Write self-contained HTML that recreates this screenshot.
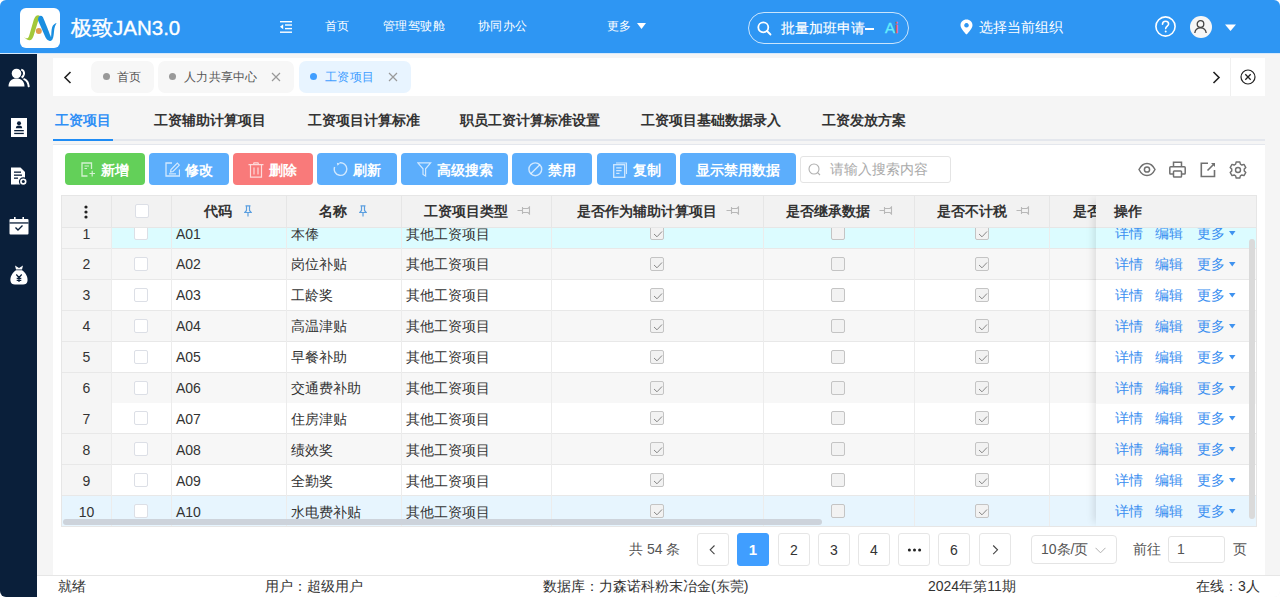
<!DOCTYPE html>
<html><head><meta charset="utf-8">
<style>
*{box-sizing:border-box;margin:0;padding:0}
html,body{width:1280px;height:597px;overflow:hidden;background:#fff;font-family:"Liberation Sans",sans-serif;color:#333}
.abs{position:absolute}
#win{position:absolute;left:0;top:0;width:1280px;height:597px;border-radius:6px;overflow:hidden;background:#f5f5f5}
#hdr{position:absolute;left:0;top:0;width:1280px;height:54px;background:#2e96f3;border-bottom:1px solid #d6e9fb}
#side{position:absolute;left:0;top:54px;width:37px;height:543px;background:#0a1f3a}
.t{position:absolute;white-space:nowrap;line-height:1}
.nav{color:#fff;font-size:12px;top:20px;letter-spacing:.45px}
#tabbar{position:absolute;left:53px;top:58px;width:1212px;height:38px;background:#fff}
.tab{position:absolute;top:3px;height:32px;border-radius:7px;background:#f7f7f7}
.dot{position:absolute;width:7px;height:7px;border-radius:50%;background:#999;top:12px}
.subtab{position:absolute;top:113px;font-size:14px;font-weight:bold;color:#333;line-height:1;white-space:nowrap}
#panel{position:absolute;left:53px;top:144px;width:1212px;height:431px;background:#fff;border-top:1px solid #e4e7ed}
.btn{position:absolute;top:153px;height:32px;border-radius:4px;background:#5caefc;color:#fff;font-size:14px;font-weight:bold}
.btn .t{top:10px}
.btn svg{position:absolute;top:9px}
#status{position:absolute;left:37px;top:575px;width:1243px;height:22px;background:#fff;border-top:1px solid #e6e6e6}
.st{position:absolute;top:3px;font-size:14px;color:#333;line-height:1;white-space:nowrap}
#tbl{position:absolute;left:61px;top:195px;width:1196px;height:332px;overflow:hidden;border:1px solid #e6e6e6;background:#fff}
.row{position:absolute;left:0;width:1194px;height:31px;border-bottom:1px solid #e8e8e8}
.vl{position:absolute;top:0;width:1px;background:#ececec}
.c{position:absolute;font-size:14px;line-height:1;white-space:nowrap;color:#333}
.cb{position:absolute;width:14px;height:14px;border:1px solid #dcdfe6;border-radius:2px;background:#fff}
.cbd{position:absolute;width:14px;height:14px;border:1px solid #c4c4c4;border-radius:2px;background:#f2f2f2}
.hd{position:absolute;top:8px;font-size:14px;font-weight:bold;line-height:1;white-space:nowrap;color:#333}
.lk{position:absolute;font-size:14px;line-height:1;white-space:nowrap;color:#3a8ef0}
.pg{position:absolute;top:533px;width:32px;height:33px;border:1px solid #e6e6e6;border-radius:3px;background:#fff;font-size:14px;color:#333;text-align:center;line-height:32px}
</style></head><body>
<div id="win">
<div id="hdr">
    <div class="abs" style="left:20px;top:8px;width:40px;height:40px;background:#fff;border-radius:6px">
      <svg width="40" height="40" viewBox="0 0 40 40">
        <path d="M3.8 29 C6 30.6 7.5 32.4 9.9 32.2 C12 32 13 29.5 13.7 27.5 L18.6 11.5 C19 10 19.4 9 20 8 C18.8 7 17 7.1 16 8.1 C14.8 9.3 14 11 13.4 13 L9.8 25.5 C9.2 27.8 8.6 29.6 7.8 30.1 C6.6 30.6 5.2 29.9 3.8 29 Z" fill="#a3c83a"/>
        <path d="M19 8.6 C20 7.4 21.8 7.5 22.8 9 C23.5 10 29.6 25.5 30.1 26.8 C30.5 28 30.8 29 31.1 29.1 C31.4 26.5 31.2 22 32.2 19 C33 16.8 34.6 15.5 36.6 14.9 C35.2 17 34.5 19.5 34.2 22 C33.8 25.5 33.8 29 32.4 31.4 C31.4 33 29.2 33.4 27.6 32.1 C26.5 31.2 25.6 29.6 24.9 28 L18.2 12.8 C17.8 11.6 18.1 9.6 19 8.6 Z" fill="#1a8ee0"/>
        <circle cx="18.8" cy="23" r="3" fill="#e39a4e"/>
      </svg>
    </div>
    <div class="t" style="left:71px;top:18px;font-size:20.5px;color:#fff;-webkit-text-stroke:0.35px #fff">极致JAN3.0</div>
    <svg class="abs" style="left:280px;top:20px" width="13" height="14" viewBox="0 0 13 14">
      <rect x="0" y="1" width="12" height="1.4" fill="#fff"/>
      <rect x="5" y="4.3" width="7" height="1.4" fill="#fff"/>
      <rect x="5" y="7.9" width="7" height="1.4" fill="#fff"/>
      <rect x="0" y="11.5" width="12" height="1.4" fill="#fff"/>
      <path d="M0 6.8 L3.2 4.3 L3.2 9.3 Z" fill="#fff"/>
    </svg>
    <div class="t nav" style="left:325px">首页</div>
    <div class="t nav" style="left:383px">管理驾驶舱</div>
    <div class="t nav" style="left:478px">协同办公</div>
    <div class="t nav" style="left:607px">更多</div>
    <svg class="abs" style="left:637px;top:23px" width="10" height="7"><path d="M0 0 L9 0 L4.5 6 Z" fill="#fff"/></svg>
    <div class="abs" style="left:748px;top:12px;width:161px;height:32px;border:1px solid rgba(255,255,255,.75);border-radius:16px"></div>
    <svg class="abs" style="left:757px;top:21px" width="15" height="15" viewBox="0 0 15 15"><circle cx="6.3" cy="6.3" r="5" stroke="#fff" stroke-width="1.8" fill="none"/><path d="M10 10 L13.5 13.5" stroke="#fff" stroke-width="1.8" stroke-linecap="round"/></svg>
    <div class="t" style="left:781px;top:21px;font-size:14px;color:#fff;-webkit-text-stroke:0.15px #fff">批量加班申请</div><div class="abs" style="left:865px;top:27.5px;width:9px;height:2px;background:#fff"></div>
    <div class="t" style="left:885px;top:20px;font-size:15px;-webkit-text-stroke:0.3px currentColor"><span style="color:#66eefc">A</span><span style="color:#f25c5c">i</span></div>
    <svg class="abs" style="left:960px;top:19px" width="13" height="16" viewBox="0 0 13 16"><path d="M6.5 0.5 C3 0.5 0.5 3 0.5 6.2 C0.5 10 6.5 15.5 6.5 15.5 C6.5 15.5 12.5 10 12.5 6.2 C12.5 3 10 0.5 6.5 0.5 Z M6.5 4 A2.3 2.3 0 1 1 6.49 4 Z" fill="#fff" fill-rule="evenodd"/></svg>
    <div class="t" style="left:979px;top:20px;font-size:14px;color:#fff">选择当前组织</div>
    <svg class="abs" style="left:1155px;top:16px" width="21" height="21" viewBox="0 0 21 21"><circle cx="10.5" cy="10.5" r="9.6" stroke="#fff" stroke-width="1.6" fill="none"/><path d="M7.5 8.2 C7.5 6.3 9 5.2 10.6 5.2 C12.3 5.2 13.6 6.4 13.6 8 C13.6 10 10.7 10.2 10.7 12.6" stroke="#fff" stroke-width="1.6" fill="none" stroke-linecap="round"/><circle cx="10.7" cy="15.4" r="1" fill="#fff"/></svg>
    <div class="abs" style="left:1189.5px;top:15.5px;width:22px;height:22px;border-radius:50%;background:#f6f6f6"></div>
    <svg class="abs" style="left:1193px;top:19px" width="15" height="15" viewBox="0 0 15 15"><circle cx="7.5" cy="5" r="3.3" stroke="#444" stroke-width="1.3" fill="none"/><path d="M1.8 14 C2.2 10.5 4.6 8.8 7.5 8.8 C10.4 8.8 12.8 10.5 13.2 14" stroke="#444" stroke-width="1.3" fill="none"/></svg>
    <svg class="abs" style="left:1225px;top:24px" width="12" height="8"><path d="M0 0.5 L11 0.5 L5.5 7 Z" fill="#fff"/></svg>
  </div>
<div id="side">
  <svg class="abs" style="left:8px;top:14px" width="22" height="20" viewBox="0 0 22 20">
    <circle cx="8.5" cy="5.5" r="4.8" fill="#fff"/>
    <path d="M0.5 18.5 C0.5 13 4 10.5 8.5 10.5 C13 10.5 16.5 13 16.5 18.5 Z" fill="#fff"/>
    <path d="M13.2 1.6 C15.2 2.2 16.3 4 16 6.2 C15.7 8 14.6 9 13.6 9.6" stroke="#fff" stroke-width="2" fill="none"/>
    <path d="M16.2 11.2 C18.8 12.4 20.4 14.8 20.7 18.3" stroke="#fff" stroke-width="2" fill="none" stroke-linecap="round"/>
  </svg>
  <svg class="abs" style="left:11px;top:64px" width="16" height="19" viewBox="0 0 16 19">
    <rect x="0" y="0" width="16" height="19" fill="#fff"/>
    <circle cx="8" cy="5.3" r="2" fill="#0a1f3a"/>
    <path d="M4.8 10.3 C4.8 8.3 6.2 7.6 8 7.6 C9.8 7.6 11.2 8.3 11.2 10.3 Z" fill="#0a1f3a"/>
    <rect x="3.2" y="12" width="9.6" height="1.3" fill="#0a1f3a"/>
    <rect x="3.2" y="14.8" width="9.6" height="1.3" fill="#0a1f3a"/>
  </svg>
  <svg class="abs" style="left:10px;top:113px" width="18" height="19" viewBox="0 0 18 19">
    <path d="M1 0.5 L10.5 0.5 L15 5 L15 17.5 L1 17.5 Z" fill="#fff"/>
    <rect x="4" y="4.5" width="7" height="1.3" fill="#0a1f3a"/>
    <rect x="4" y="7.5" width="8" height="1.3" fill="#0a1f3a"/>
    <rect x="4" y="10.5" width="4" height="1.3" fill="#0a1f3a"/>
    <circle cx="13.3" cy="14.6" r="3.8" fill="#fff" stroke="#0a1f3a" stroke-width="1.2"/>
    <circle cx="13.3" cy="14.6" r="1.5" fill="#0a1f3a"/>
  </svg>
  <svg class="abs" style="left:9px;top:163px" width="20" height="18" viewBox="0 0 20 18">
    <rect x="0.5" y="2" width="19" height="15.5" rx="1" fill="#fff"/>
    <rect x="0.5" y="5.3" width="19" height="1.3" fill="#0a1f3a"/>
    <rect x="5" y="0" width="1.6" height="4" fill="#fff"/>
    <rect x="13.4" y="0" width="1.6" height="4" fill="#fff"/>
    <path d="M6.5 10.5 L9 13 L13.5 8.5" stroke="#0a1f3a" stroke-width="1.4" fill="none"/>
  </svg>
  <svg class="abs" style="left:10px;top:211px" width="18" height="20" viewBox="0 0 18 20">
    <path d="M5 0.5 L9 3 L13 0.5 L12 4.5 L6 4.5 Z" fill="#fff"/>
    <path d="M6 5.2 L12 5.2 C16 8 18 12 17.5 16 C17.2 18.5 15.5 19.5 13 19.5 L5 19.5 C2.5 19.5 0.8 18.5 0.5 16 C0 12 2 8 6 5.2 Z" fill="#fff"/>
    <path d="M6.3 9.5 L9 12.5 L11.7 9.5 M9 12.5 L9 17 M6.7 13.3 L11.3 13.3 M6.7 15.3 L11.3 15.3" stroke="#0a1f3a" stroke-width="1.2" fill="none"/>
  </svg>
</div>
<div id="tabbar">
    <svg class="abs" style="left:9.5px;top:12.5px" width="9" height="13" viewBox="0 0 9 13"><path d="M7.5 1 L2 6.5 L7.5 12" stroke="#222" stroke-width="1.6" fill="none"/></svg>
    <div class="tab" style="left:38px;width:63px"><div class="dot" style="left:12px"></div><div class="t" style="left:26px;top:10px;font-size:12px;letter-spacing:.3px;color:#555">首页</div></div>
    <div class="tab" style="left:105px;width:136px"><div class="dot" style="left:11px"></div><div class="t" style="left:26px;top:10px;font-size:12px;letter-spacing:.3px;color:#555">人力共享中心</div>
      <svg class="abs" style="left:113px;top:11px" width="10" height="10"><path d="M1 1 L9 9 M9 1 L1 9" stroke="#999" stroke-width="1.2"/></svg></div>
    <div class="tab" style="left:246px;width:112px;background:#e8f4ff"><div class="dot" style="left:11px;background:#409eff"></div><div class="t" style="left:26px;top:10px;font-size:12px;letter-spacing:.3px;color:#409eff">工资项目</div>
      <svg class="abs" style="left:89px;top:11px" width="10" height="10"><path d="M1 1 L9 9 M9 1 L1 9" stroke="#999" stroke-width="1.2"/></svg></div>
    <div class="abs" style="left:1177px;top:0;width:1px;height:38px;background:#f0f0f0"></div>
    <svg class="abs" style="left:1159px;top:12.5px" width="9" height="13" viewBox="0 0 9 13"><path d="M1.5 1 L7 6.5 L1.5 12" stroke="#222" stroke-width="1.6" fill="none"/></svg>
    <svg class="abs" style="left:1187px;top:11px" width="16" height="16" viewBox="0 0 16 16"><circle cx="8" cy="8" r="7" stroke="#222" stroke-width="1.2" fill="none"/><path d="M5.3 5.3 L10.7 10.7 M10.7 5.3 L5.3 10.7" stroke="#222" stroke-width="1.3"/></svg>
  </div>
<div class="subtab" style="left:55px;color:#2f8ff5">工资项目</div>
<div class="subtab" style="left:154px">工资辅助计算项目</div>
<div class="subtab" style="left:308px">工资项目计算标准</div>
<div class="subtab" style="left:460px">职员工资计算标准设置</div>
<div class="subtab" style="left:641px">工资项目基础数据录入</div>
<div class="subtab" style="left:822px">工资发放方案</div>
<div class="abs" style="left:53px;top:139px;width:1212px;height:2px;background:#e4e7ed"></div>
<div class="abs" style="left:53px;top:139px;width:60px;height:2px;background:#1f8cf5"></div>
<div id="panel"></div>
<div class="btn" style="left:65px;width:80px;background:#63d059"><svg style="left:16px" width="15" height="15" viewBox="0 0 15 15"><path d="M10.5 7 L10.5 1 L1 1 L1 14 L6.5 14" stroke="rgba(255,255,255,.72)" stroke-width="1.3" fill="none"/><path d="M3.5 4 L8 4 M3.5 6.5 L6 6.5 M8.5 11.5 L14 11.5 M11.2 8.8 L11.2 14.5" stroke="rgba(255,255,255,.72)" stroke-width="1.2" fill="none"/></svg><div class="t" style="left:36px">新增</div></div>
<div class="btn" style="left:149px;width:80px"><svg style="left:16px" width="15" height="15" viewBox="0 0 15 15"><path d="M7 1 L1 1 L1 14 L14.5 14 L14.5 7.5" stroke="rgba(255,255,255,.72)" stroke-width="1.3" fill="none"/><path d="M5.5 10 L6 7.5 L12.3 1.2 L14.3 3.2 L8 9.5 Z M4 11.8 L11 11.8" stroke="rgba(255,255,255,.72)" stroke-width="1.2" fill="none"/></svg><div class="t" style="left:36px">修改</div></div>
<div class="btn" style="left:233px;width:80px;background:#f97a7a"><svg style="left:15px" width="16" height="16" viewBox="0 0 16 16"><path d="M0.5 2.6 L15.5 2.6 M5.5 2.5 L6 0.8 L10 0.8 L10.5 2.5 M2.5 3 L2.5 15.2 L13.5 15.2 L13.5 3 M6 5.5 L6 12.5 M10 5.5 L10 12.5" stroke="rgba(255,255,255,.72)" stroke-width="1.2" fill="none"/></svg><div class="t" style="left:36px">删除</div></div>
<div class="btn" style="left:317px;width:80px"><svg style="left:16px" width="15" height="15" viewBox="0 0 15 15"><path d="M4.6 1.8 A6.3 6.3 0 1 0 11 1.8" stroke="rgba(255,255,255,.72)" stroke-width="1.4" fill="none" transform="rotate(-40 7.5 7.5)"/><path d="M3.8 0.8 L7 1.6 L4.5 3.8 Z" fill="rgba(255,255,255,.72)"/></svg><div class="t" style="left:36px">刷新</div></div>
<div class="btn" style="left:401px;width:107px"><svg style="left:16px" width="15" height="15" viewBox="0 0 15 15"><path d="M0.8 0.8 L13.6 0.8 L8.6 6.8 L8.6 14 L6 12.5 L6 6.8 Z" stroke="rgba(255,255,255,.72)" stroke-width="1.2" fill="none"/></svg><div class="t" style="left:36px">高级搜索</div></div>
<div class="btn" style="left:512px;width:80px"><svg style="left:16px" width="15" height="15" viewBox="0 0 15 15"><circle cx="7.3" cy="7.3" r="6.4" stroke="rgba(255,255,255,.72)" stroke-width="1.4" fill="none"/><path d="M2.8 11.8 L11.8 2.8" stroke="rgba(255,255,255,.72)" stroke-width="1.4"/></svg><div class="t" style="left:36px">禁用</div></div>
<div class="btn" style="left:597px;width:79px"><svg style="left:16px" width="15" height="16" viewBox="0 0 15 16"><path d="M3 1 L13.5 1 L13.5 12" stroke="rgba(255,255,255,.72)" stroke-width="1.1" fill="none"/><rect x="0.7" y="2.7" width="11" height="12.6" stroke="rgba(255,255,255,.72)" stroke-width="1.3" fill="none"/><path d="M3.2 5.8 L8.6 5.8 M3.2 8.6 L8.6 8.6 M3.2 11.4 L6.5 11.4" stroke="rgba(255,255,255,.72)" stroke-width="1.2"/></svg><div class="t" style="left:36px">复制</div></div>
<div class="btn" style="left:680px;width:116px"><div class="t" style="left:16px">显示禁用数据</div></div>
<div class="abs" style="left:800px;top:156px;width:151px;height:27px;border:1px solid #e4e4e4;border-radius:3px;background:#fff">
  <svg class="abs" style="left:7px;top:6px" width="13" height="13" viewBox="0 0 13 13"><circle cx="6" cy="6" r="5" stroke="#b0b0b0" stroke-width="1.1" fill="none"/><path d="M9.6 9.6 L12 12" stroke="#b0b0b0" stroke-width="1.1"/></svg>
  <div class="t" style="left:29px;top:5px;font-size:14px;color:#aaa">请输入搜索内容</div>
</div>
<svg class="abs" style="left:1138px;top:162px" width="18" height="15" viewBox="0 0 18 15"><path d="M1 7.5 C3 3.5 6 1.5 9 1.5 C12 1.5 15 3.5 17 7.5 C15 11.5 12 13.5 9 13.5 C6 13.5 3 11.5 1 7.5 Z" stroke="#707070" stroke-width="1.5" fill="none"/><circle cx="9" cy="7.5" r="2.6" stroke="#707070" stroke-width="1.5" fill="none"/></svg>
<svg class="abs" style="left:1169px;top:161px" width="17" height="17" viewBox="0 0 17 17"><path d="M4.5 5.5 L4.5 1.2 L12.5 1.2 L12.5 5.5" stroke="#707070" stroke-width="1.5" fill="none"/><path d="M4 13 L1.5 13 C1 13 0.8 12.7 0.8 12.2 L0.8 6.8 C0.8 6.2 1.2 5.8 1.8 5.8 L15.2 5.8 C15.8 5.8 16.2 6.2 16.2 6.8 L16.2 12.2 C16.2 12.7 16 13 15.5 13 L13 13" stroke="#707070" stroke-width="1.5" fill="none"/><rect x="4.5" y="10" width="8" height="6" rx="0.8" stroke="#707070" stroke-width="1.5" fill="none"/></svg>
<svg class="abs" style="left:1200px;top:162px" width="16" height="16" viewBox="0 0 16 16"><path d="M8 1.3 L1.3 1.3 L1.3 14.5 L14.5 14.5 L14.5 8" stroke="#707070" stroke-width="1.6" fill="none"/><path d="M7.5 8.5 L14 2" stroke="#707070" stroke-width="1.6"/><path d="M11 1 L15 1 L15 5 Z" fill="#707070"/></svg>
<svg class="abs" style="left:1229px;top:161px" width="18" height="18" viewBox="0 0 18 18"><path d="M7.16 1.01 L10.84 1.01 L11.36 3.16 L12.88 4.04 L15.00 3.41 L16.84 6.60 L15.24 8.12 L15.24 9.88 L16.84 11.40 L15.00 14.59 L12.88 13.96 L11.36 14.84 L10.84 16.99 L7.16 16.99 L6.64 14.84 L5.12 13.96 L3.00 14.59 L1.16 11.40 L2.76 9.88 L2.76 8.12 L1.16 6.60 L3.00 3.41 L5.12 4.04 L6.64 3.16 Z" stroke="#707070" stroke-width="1.4" fill="none" stroke-linejoin="round"/><circle cx="9" cy="9" r="2.5" stroke="#707070" stroke-width="1.4" fill="none"/></svg>
<div id="tbl">
<div class="row" style="top:22.00px;background:#dcfcff">
<div class="abs" style="left:0;top:0;width:49px;height:30px;background:#f5f5f5"></div>
<div class="c" style="left:0;width:49px;text-align:center;top:8.5px">1</div>
<div class="cb" style="left:72px;top:8px"></div>
<div class="c" style="left:114px;top:8.5px">A01</div>
<div class="c" style="left:229px;top:8.5px">本俸</div>
<div class="c" style="left:344px;top:8.5px">其他工资项目</div>
<div class="cbd" style="left:588px;top:8px"><svg width="14" height="14" style="position:absolute;left:0;top:0" viewBox="0 0 14 14"><path d="M3 7 L6 9.8 L11 4.5" stroke="#888" stroke-width="1" fill="none"/></svg></div>
<div class="cbd" style="left:769px;top:8px"></div>
<div class="cbd" style="left:913px;top:8px"><svg width="14" height="14" style="position:absolute;left:0;top:0" viewBox="0 0 14 14"><path d="M3 7 L6 9.8 L11 4.5" stroke="#888" stroke-width="1" fill="none"/></svg></div>
</div>
<div class="row" style="top:52.90px;background:#f7f7f7">
<div class="abs" style="left:0;top:0;width:49px;height:30px;background:#f5f5f5"></div>
<div class="c" style="left:0;width:49px;text-align:center;top:8.5px">2</div>
<div class="cb" style="left:72px;top:8px"></div>
<div class="c" style="left:114px;top:8.5px">A02</div>
<div class="c" style="left:229px;top:8.5px">岗位补贴</div>
<div class="c" style="left:344px;top:8.5px">其他工资项目</div>
<div class="cbd" style="left:588px;top:8px"><svg width="14" height="14" style="position:absolute;left:0;top:0" viewBox="0 0 14 14"><path d="M3 7 L6 9.8 L11 4.5" stroke="#888" stroke-width="1" fill="none"/></svg></div>
<div class="cbd" style="left:769px;top:8px"></div>
<div class="cbd" style="left:913px;top:8px"><svg width="14" height="14" style="position:absolute;left:0;top:0" viewBox="0 0 14 14"><path d="M3 7 L6 9.8 L11 4.5" stroke="#888" stroke-width="1" fill="none"/></svg></div>
</div>
<div class="row" style="top:83.80px;background:#fff">
<div class="abs" style="left:0;top:0;width:49px;height:30px;background:#f5f5f5"></div>
<div class="c" style="left:0;width:49px;text-align:center;top:8.5px">3</div>
<div class="cb" style="left:72px;top:8px"></div>
<div class="c" style="left:114px;top:8.5px">A03</div>
<div class="c" style="left:229px;top:8.5px">工龄奖</div>
<div class="c" style="left:344px;top:8.5px">其他工资项目</div>
<div class="cbd" style="left:588px;top:8px"><svg width="14" height="14" style="position:absolute;left:0;top:0" viewBox="0 0 14 14"><path d="M3 7 L6 9.8 L11 4.5" stroke="#888" stroke-width="1" fill="none"/></svg></div>
<div class="cbd" style="left:769px;top:8px"></div>
<div class="cbd" style="left:913px;top:8px"><svg width="14" height="14" style="position:absolute;left:0;top:0" viewBox="0 0 14 14"><path d="M3 7 L6 9.8 L11 4.5" stroke="#888" stroke-width="1" fill="none"/></svg></div>
</div>
<div class="row" style="top:114.70px;background:#f7f7f7">
<div class="abs" style="left:0;top:0;width:49px;height:30px;background:#f5f5f5"></div>
<div class="c" style="left:0;width:49px;text-align:center;top:8.5px">4</div>
<div class="cb" style="left:72px;top:8px"></div>
<div class="c" style="left:114px;top:8.5px">A04</div>
<div class="c" style="left:229px;top:8.5px">高温津贴</div>
<div class="c" style="left:344px;top:8.5px">其他工资项目</div>
<div class="cbd" style="left:588px;top:8px"><svg width="14" height="14" style="position:absolute;left:0;top:0" viewBox="0 0 14 14"><path d="M3 7 L6 9.8 L11 4.5" stroke="#888" stroke-width="1" fill="none"/></svg></div>
<div class="cbd" style="left:769px;top:8px"></div>
<div class="cbd" style="left:913px;top:8px"><svg width="14" height="14" style="position:absolute;left:0;top:0" viewBox="0 0 14 14"><path d="M3 7 L6 9.8 L11 4.5" stroke="#888" stroke-width="1" fill="none"/></svg></div>
</div>
<div class="row" style="top:145.60px;background:#fff">
<div class="abs" style="left:0;top:0;width:49px;height:30px;background:#f5f5f5"></div>
<div class="c" style="left:0;width:49px;text-align:center;top:8.5px">5</div>
<div class="cb" style="left:72px;top:8px"></div>
<div class="c" style="left:114px;top:8.5px">A05</div>
<div class="c" style="left:229px;top:8.5px">早餐补助</div>
<div class="c" style="left:344px;top:8.5px">其他工资项目</div>
<div class="cbd" style="left:588px;top:8px"><svg width="14" height="14" style="position:absolute;left:0;top:0" viewBox="0 0 14 14"><path d="M3 7 L6 9.8 L11 4.5" stroke="#888" stroke-width="1" fill="none"/></svg></div>
<div class="cbd" style="left:769px;top:8px"></div>
<div class="cbd" style="left:913px;top:8px"><svg width="14" height="14" style="position:absolute;left:0;top:0" viewBox="0 0 14 14"><path d="M3 7 L6 9.8 L11 4.5" stroke="#888" stroke-width="1" fill="none"/></svg></div>
</div>
<div class="row" style="top:176.50px;background:#f7f7f7">
<div class="abs" style="left:0;top:0;width:49px;height:30px;background:#f5f5f5"></div>
<div class="c" style="left:0;width:49px;text-align:center;top:8.5px">6</div>
<div class="cb" style="left:72px;top:8px"></div>
<div class="c" style="left:114px;top:8.5px">A06</div>
<div class="c" style="left:229px;top:8.5px">交通费补助</div>
<div class="c" style="left:344px;top:8.5px">其他工资项目</div>
<div class="cbd" style="left:588px;top:8px"><svg width="14" height="14" style="position:absolute;left:0;top:0" viewBox="0 0 14 14"><path d="M3 7 L6 9.8 L11 4.5" stroke="#888" stroke-width="1" fill="none"/></svg></div>
<div class="cbd" style="left:769px;top:8px"></div>
<div class="cbd" style="left:913px;top:8px"><svg width="14" height="14" style="position:absolute;left:0;top:0" viewBox="0 0 14 14"><path d="M3 7 L6 9.8 L11 4.5" stroke="#888" stroke-width="1" fill="none"/></svg></div>
</div>
<div class="row" style="top:207.40px;background:#fff">
<div class="abs" style="left:0;top:0;width:49px;height:30px;background:#f5f5f5"></div>
<div class="c" style="left:0;width:49px;text-align:center;top:8.5px">7</div>
<div class="cb" style="left:72px;top:8px"></div>
<div class="c" style="left:114px;top:8.5px">A07</div>
<div class="c" style="left:229px;top:8.5px">住房津贴</div>
<div class="c" style="left:344px;top:8.5px">其他工资项目</div>
<div class="cbd" style="left:588px;top:8px"><svg width="14" height="14" style="position:absolute;left:0;top:0" viewBox="0 0 14 14"><path d="M3 7 L6 9.8 L11 4.5" stroke="#888" stroke-width="1" fill="none"/></svg></div>
<div class="cbd" style="left:769px;top:8px"></div>
<div class="cbd" style="left:913px;top:8px"><svg width="14" height="14" style="position:absolute;left:0;top:0" viewBox="0 0 14 14"><path d="M3 7 L6 9.8 L11 4.5" stroke="#888" stroke-width="1" fill="none"/></svg></div>
</div>
<div class="row" style="top:238.30px;background:#f7f7f7">
<div class="abs" style="left:0;top:0;width:49px;height:30px;background:#f5f5f5"></div>
<div class="c" style="left:0;width:49px;text-align:center;top:8.5px">8</div>
<div class="cb" style="left:72px;top:8px"></div>
<div class="c" style="left:114px;top:8.5px">A08</div>
<div class="c" style="left:229px;top:8.5px">绩效奖</div>
<div class="c" style="left:344px;top:8.5px">其他工资项目</div>
<div class="cbd" style="left:588px;top:8px"><svg width="14" height="14" style="position:absolute;left:0;top:0" viewBox="0 0 14 14"><path d="M3 7 L6 9.8 L11 4.5" stroke="#888" stroke-width="1" fill="none"/></svg></div>
<div class="cbd" style="left:769px;top:8px"></div>
<div class="cbd" style="left:913px;top:8px"><svg width="14" height="14" style="position:absolute;left:0;top:0" viewBox="0 0 14 14"><path d="M3 7 L6 9.8 L11 4.5" stroke="#888" stroke-width="1" fill="none"/></svg></div>
</div>
<div class="row" style="top:269.20px;background:#fff">
<div class="abs" style="left:0;top:0;width:49px;height:30px;background:#f5f5f5"></div>
<div class="c" style="left:0;width:49px;text-align:center;top:8.5px">9</div>
<div class="cb" style="left:72px;top:8px"></div>
<div class="c" style="left:114px;top:8.5px">A09</div>
<div class="c" style="left:229px;top:8.5px">全勤奖</div>
<div class="c" style="left:344px;top:8.5px">其他工资项目</div>
<div class="cbd" style="left:588px;top:8px"><svg width="14" height="14" style="position:absolute;left:0;top:0" viewBox="0 0 14 14"><path d="M3 7 L6 9.8 L11 4.5" stroke="#888" stroke-width="1" fill="none"/></svg></div>
<div class="cbd" style="left:769px;top:8px"></div>
<div class="cbd" style="left:913px;top:8px"><svg width="14" height="14" style="position:absolute;left:0;top:0" viewBox="0 0 14 14"><path d="M3 7 L6 9.8 L11 4.5" stroke="#888" stroke-width="1" fill="none"/></svg></div>
</div>
<div class="row" style="top:300.10px;background:#e7f5fe">
<div class="abs" style="left:0;top:0;width:49px;height:30px;background:#e7f5fe"></div>
<div class="c" style="left:0;width:49px;text-align:center;top:8.5px">10</div>
<div class="cb" style="left:72px;top:8px"></div>
<div class="c" style="left:114px;top:8.5px">A10</div>
<div class="c" style="left:229px;top:8.5px">水电费补贴</div>
<div class="c" style="left:344px;top:8.5px">其他工资项目</div>
<div class="cbd" style="left:588px;top:8px"><svg width="14" height="14" style="position:absolute;left:0;top:0" viewBox="0 0 14 14"><path d="M3 7 L6 9.8 L11 4.5" stroke="#888" stroke-width="1" fill="none"/></svg></div>
<div class="cbd" style="left:769px;top:8px"></div>
<div class="cbd" style="left:913px;top:8px"><svg width="14" height="14" style="position:absolute;left:0;top:0" viewBox="0 0 14 14"><path d="M3 7 L6 9.8 L11 4.5" stroke="#888" stroke-width="1" fill="none"/></svg></div>
</div>
<div class="vl" style="left:49px;height:332px"></div>
<div class="vl" style="left:109px;height:332px"></div>
<div class="vl" style="left:224px;height:332px"></div>
<div class="vl" style="left:339px;height:332px"></div>
<div class="vl" style="left:489px;height:332px"></div>
<div class="vl" style="left:701px;height:332px"></div>
<div class="vl" style="left:852px;height:332px"></div>
<div class="vl" style="left:987px;height:332px"></div>
<div class="abs" style="left:0;top:0;width:1194px;height:32px;background:#f2f2f2;border-bottom:1px solid #e6e6e6">
<div class="vl" style="left:49px;height:31px;background:#e6e6e6"></div>
<div class="vl" style="left:109px;height:31px;background:#e6e6e6"></div>
<div class="vl" style="left:224px;height:31px;background:#e6e6e6"></div>
<div class="vl" style="left:339px;height:31px;background:#e6e6e6"></div>
<div class="vl" style="left:489px;height:31px;background:#e6e6e6"></div>
<div class="vl" style="left:701px;height:31px;background:#e6e6e6"></div>
<div class="vl" style="left:852px;height:31px;background:#e6e6e6"></div>
<div class="vl" style="left:987px;height:31px;background:#e6e6e6"></div>
<svg class="abs" style="left:21px;top:9px" width="6" height="14" viewBox="0 0 6 14"><circle cx="3" cy="2" r="1.6" fill="#222"/><circle cx="3" cy="7" r="1.6" fill="#222"/><circle cx="3" cy="12" r="1.6" fill="#222"/></svg>
<div class="cb" style="left:73px;top:8px"></div>
<div class="hd" style="left:142px">代码</div>
<svg class="abs" style="left:182px;top:9px" width="8" height="12" viewBox="0 0 8 12"><path d="M1.5 0.8 L6.5 0.8 M2.5 1 L2.5 5.5 L0.8 7.5 L7.2 7.5 L5.5 5.5 L5.5 1 M4 7.5 L4 11.5" stroke="#5b9fe0" stroke-width="1.2" fill="none"/></svg>
<div class="hd" style="left:257px">名称</div>
<svg class="abs" style="left:297px;top:9px" width="8" height="12" viewBox="0 0 8 12"><path d="M1.5 0.8 L6.5 0.8 M2.5 1 L2.5 5.5 L0.8 7.5 L7.2 7.5 L5.5 5.5 L5.5 1 M4 7.5 L4 11.5" stroke="#5b9fe0" stroke-width="1.2" fill="none"/></svg>
<div class="hd" style="left:362px">工资项目类型</div>
<svg class="abs" style="left:455px;top:10px" width="14" height="9" viewBox="0 0 14 9"><path d="M0.5 4.5 L5 4.5 M5.5 1 L5.5 8 M5.5 2.5 L11 2.5 L12.5 1 L12.5 8 L11 6.5 L5.5 6.5" stroke="#b8b8b8" stroke-width="1.1" fill="none"/></svg>
<div class="hd" style="left:515px">是否作为辅助计算项目</div>
<svg class="abs" style="left:664px;top:10px" width="14" height="9" viewBox="0 0 14 9"><path d="M0.5 4.5 L5 4.5 M5.5 1 L5.5 8 M5.5 2.5 L11 2.5 L12.5 1 L12.5 8 L11 6.5 L5.5 6.5" stroke="#b8b8b8" stroke-width="1.1" fill="none"/></svg>
<div class="hd" style="left:724px">是否继承数据</div>
<svg class="abs" style="left:817px;top:10px" width="14" height="9" viewBox="0 0 14 9"><path d="M0.5 4.5 L5 4.5 M5.5 1 L5.5 8 M5.5 2.5 L11 2.5 L12.5 1 L12.5 8 L11 6.5 L5.5 6.5" stroke="#b8b8b8" stroke-width="1.1" fill="none"/></svg>
<div class="hd" style="left:875px">是否不计税</div>
<svg class="abs" style="left:954px;top:10px" width="14" height="9" viewBox="0 0 14 9"><path d="M0.5 4.5 L5 4.5 M5.5 1 L5.5 8 M5.5 2.5 L11 2.5 L12.5 1 L12.5 8 L11 6.5 L5.5 6.5" stroke="#b8b8b8" stroke-width="1.1" fill="none"/></svg>
<div class="hd" style="left:1011px">是否参与</div>
</div>
<div class="abs" style="left:1px;top:323px;width:759px;height:6px;border-radius:3px;background:#cdd3db"></div>
<div class="abs" style="left:1034px;top:0;width:160px;height:330px;background:transparent;box-shadow:-6px 0 8px -4px rgba(0,0,0,.12)">
<div class="abs" style="left:0;top:0;width:160px;height:32px;background:#f2f2f2;border-bottom:1px solid #e6e6e6"></div>
<div class="hd" style="left:18px">操作</div>
<div class="abs" style="left:0;top:22.00px;width:160px;height:31px;background:#dcfcff;border-bottom:1px solid #e8e8e8;clip-path:inset(10.00px 0 0 0)">
<div class="lk" style="left:19px;top:8px">详情</div><div class="lk" style="left:59px;top:8px">编辑</div><div class="lk" style="left:101px;top:8px">更多</div>
<svg class="abs" style="left:133px;top:13px" width="7" height="5"><path d="M0 0 L6.5 0 L3.25 4.5 Z" fill="#3f92ef"/></svg>
</div>
<div class="abs" style="left:0;top:52.90px;width:160px;height:31px;background:#f7f7f7;border-bottom:1px solid #e8e8e8;clip-path:inset(0.00px 0 0 0)">
<div class="lk" style="left:19px;top:8px">详情</div><div class="lk" style="left:59px;top:8px">编辑</div><div class="lk" style="left:101px;top:8px">更多</div>
<svg class="abs" style="left:133px;top:13px" width="7" height="5"><path d="M0 0 L6.5 0 L3.25 4.5 Z" fill="#3f92ef"/></svg>
</div>
<div class="abs" style="left:0;top:83.80px;width:160px;height:31px;background:#fff;border-bottom:1px solid #e8e8e8;clip-path:inset(0.00px 0 0 0)">
<div class="lk" style="left:19px;top:8px">详情</div><div class="lk" style="left:59px;top:8px">编辑</div><div class="lk" style="left:101px;top:8px">更多</div>
<svg class="abs" style="left:133px;top:13px" width="7" height="5"><path d="M0 0 L6.5 0 L3.25 4.5 Z" fill="#3f92ef"/></svg>
</div>
<div class="abs" style="left:0;top:114.70px;width:160px;height:31px;background:#f7f7f7;border-bottom:1px solid #e8e8e8;clip-path:inset(0.00px 0 0 0)">
<div class="lk" style="left:19px;top:8px">详情</div><div class="lk" style="left:59px;top:8px">编辑</div><div class="lk" style="left:101px;top:8px">更多</div>
<svg class="abs" style="left:133px;top:13px" width="7" height="5"><path d="M0 0 L6.5 0 L3.25 4.5 Z" fill="#3f92ef"/></svg>
</div>
<div class="abs" style="left:0;top:145.60px;width:160px;height:31px;background:#fff;border-bottom:1px solid #e8e8e8;clip-path:inset(0.00px 0 0 0)">
<div class="lk" style="left:19px;top:8px">详情</div><div class="lk" style="left:59px;top:8px">编辑</div><div class="lk" style="left:101px;top:8px">更多</div>
<svg class="abs" style="left:133px;top:13px" width="7" height="5"><path d="M0 0 L6.5 0 L3.25 4.5 Z" fill="#3f92ef"/></svg>
</div>
<div class="abs" style="left:0;top:176.50px;width:160px;height:31px;background:#f7f7f7;border-bottom:1px solid #e8e8e8;clip-path:inset(0.00px 0 0 0)">
<div class="lk" style="left:19px;top:8px">详情</div><div class="lk" style="left:59px;top:8px">编辑</div><div class="lk" style="left:101px;top:8px">更多</div>
<svg class="abs" style="left:133px;top:13px" width="7" height="5"><path d="M0 0 L6.5 0 L3.25 4.5 Z" fill="#3f92ef"/></svg>
</div>
<div class="abs" style="left:0;top:207.40px;width:160px;height:31px;background:#fff;border-bottom:1px solid #e8e8e8;clip-path:inset(0.00px 0 0 0)">
<div class="lk" style="left:19px;top:8px">详情</div><div class="lk" style="left:59px;top:8px">编辑</div><div class="lk" style="left:101px;top:8px">更多</div>
<svg class="abs" style="left:133px;top:13px" width="7" height="5"><path d="M0 0 L6.5 0 L3.25 4.5 Z" fill="#3f92ef"/></svg>
</div>
<div class="abs" style="left:0;top:238.30px;width:160px;height:31px;background:#f7f7f7;border-bottom:1px solid #e8e8e8;clip-path:inset(0.00px 0 0 0)">
<div class="lk" style="left:19px;top:8px">详情</div><div class="lk" style="left:59px;top:8px">编辑</div><div class="lk" style="left:101px;top:8px">更多</div>
<svg class="abs" style="left:133px;top:13px" width="7" height="5"><path d="M0 0 L6.5 0 L3.25 4.5 Z" fill="#3f92ef"/></svg>
</div>
<div class="abs" style="left:0;top:269.20px;width:160px;height:31px;background:#fff;border-bottom:1px solid #e8e8e8;clip-path:inset(0.00px 0 0 0)">
<div class="lk" style="left:19px;top:8px">详情</div><div class="lk" style="left:59px;top:8px">编辑</div><div class="lk" style="left:101px;top:8px">更多</div>
<svg class="abs" style="left:133px;top:13px" width="7" height="5"><path d="M0 0 L6.5 0 L3.25 4.5 Z" fill="#3f92ef"/></svg>
</div>
<div class="abs" style="left:0;top:300.10px;width:160px;height:31px;background:#e7f5fe;border-bottom:1px solid #e8e8e8;clip-path:inset(0.00px 0 0 0)">
<div class="lk" style="left:19px;top:8px">详情</div><div class="lk" style="left:59px;top:8px">编辑</div><div class="lk" style="left:101px;top:8px">更多</div>
<svg class="abs" style="left:133px;top:13px" width="7" height="5"><path d="M0 0 L6.5 0 L3.25 4.5 Z" fill="#3f92ef"/></svg>
</div>
</div>
<div class="abs" style="left:1187px;top:43px;width:6px;height:280px;border-radius:3px;background:#dadada"></div>
</div>
<div class="t" style="left:629px;top:542px;font-size:14px;color:#555">共 54 条</div>
<div class="pg" style="left:697px"><svg style="position:absolute;left:11px;top:11px" width="7" height="10"><path d="M5.5 0.5 L1.2 4.8 L5.5 9.1" stroke="#444" stroke-width="1.1" fill="none"/></svg></div>
<div class="pg" style="left:737px;background:#409eff;border-color:#409eff;color:#fff;font-weight:bold;font-size:15px">1</div>
<div class="pg" style="left:778px">2</div>
<div class="pg" style="left:818px">3</div>
<div class="pg" style="left:858px">4</div>
<div class="pg" style="left:898px"><svg style="position:absolute;left:0;top:0" width="32" height="32"><circle cx="10.4" cy="16" r="1.5" fill="#222"/><circle cx="15.5" cy="16" r="1.5" fill="#222"/><circle cx="20.6" cy="16" r="1.5" fill="#222"/></svg></div>
<div class="pg" style="left:938px">6</div>
<div class="pg" style="left:979px"><svg style="position:absolute;left:12px;top:11px" width="7" height="10"><path d="M1.2 0.5 L5.5 4.8 L1.2 9.1" stroke="#444" stroke-width="1.1" fill="none"/></svg></div>
<div class="abs" style="left:1031px;top:535px;width:86px;height:29px;border:1px solid #e4e4e4;border-radius:4px;background:#fff">
 <div class="t" style="left:9px;top:6px;font-size:14px;color:#555">10条/页</div>
 <svg class="abs" style="left:63px;top:10.5px" width="11" height="7"><path d="M0.5 0.8 L5.5 5.8 L10.5 0.8" stroke="#b0b0b0" stroke-width="1" fill="none"/></svg>
</div>
<div class="t" style="left:1133px;top:542px;font-size:14px;color:#555">前往</div>
<div class="abs" style="left:1168px;top:536px;width:57px;height:27px;border:1px solid #e4e4e4;border-radius:3px;background:#fff"><div class="t" style="left:8px;top:5px;font-size:14px;color:#555">1</div></div>
<div class="t" style="left:1233px;top:542px;font-size:14px;color:#555">页</div>
<div id="status">
    <div class="st" style="left:21px">就绪</div>
    <div class="st" style="left:228px">用户：超级用户</div>
    <div class="st" style="left:506px">数据库：力森诺科粉末冶金(东莞)</div>
    <div class="st" style="left:891px">2024年第11期</div>
    <div class="st" style="left:1159px">在线：3人</div>
  </div>
</div>
</body></html>
